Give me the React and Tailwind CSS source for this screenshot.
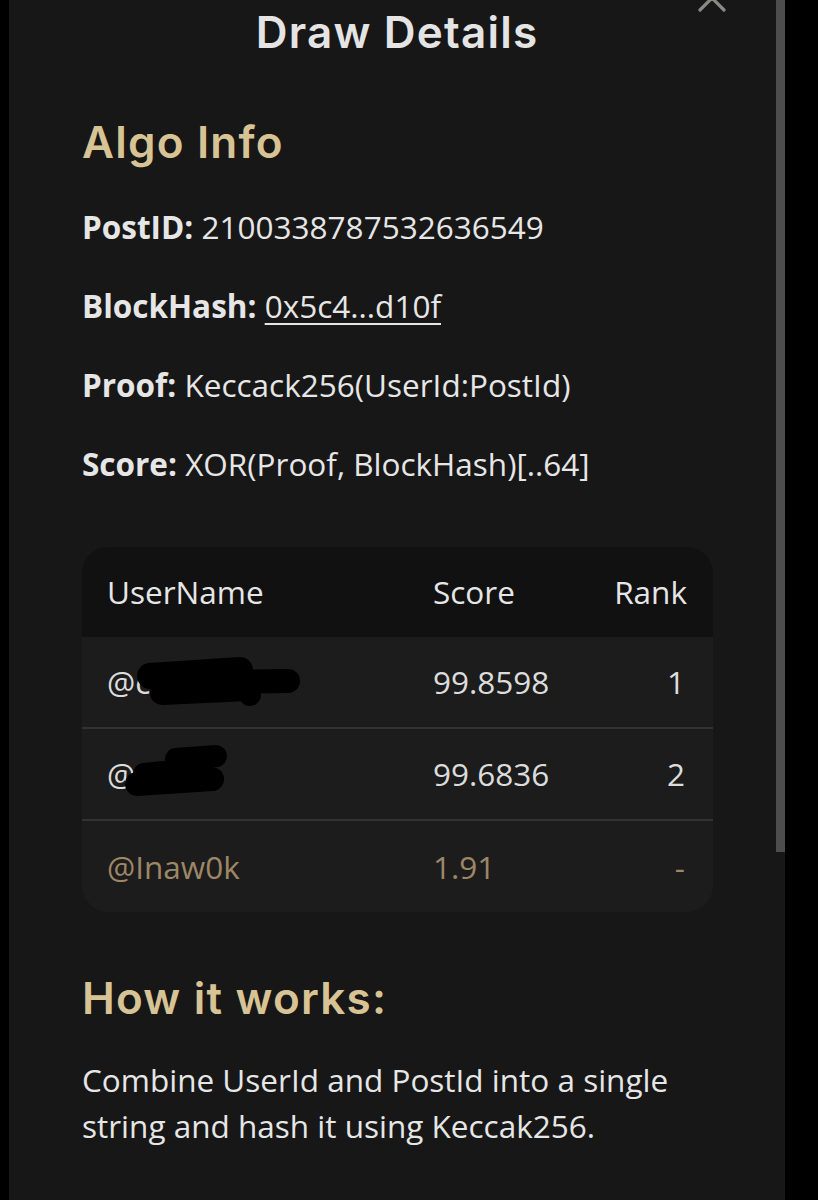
import React from "react";

const body = { fontFamily: '"Open Sans", "Noto Sans", sans-serif' };
const head = { fontFamily: 'Inter, "Open Sans", sans-serif' };

function Scribble1() {
  return (
    <svg className="absolute left-0 top-0" width="320" height="92" viewBox="0 0 320 92">
      <g stroke="#000" strokeLinecap="round" fill="none">
        <path d="M68 39 L158 33" strokeWidth="26" />
        <path d="M80 56 L166 52" strokeWidth="24" />
        <path d="M150 45 L206 44" strokeWidth="24" />
      </g>
      <circle cx="168" cy="58" r="11" fill="#000" />
    </svg>
  );
}

function Scribble2() {
  return (
    <svg className="absolute left-0 top-0" width="320" height="92" viewBox="0 0 320 92">
      <g stroke="#000" strokeLinecap="round" fill="none">
        <path d="M94 30 L134 27" strokeWidth="22" />
        <path d="M55 55 L130 50" strokeWidth="24" />
        <path d="M62 45 L92 42" strokeWidth="22" />
      </g>
    </svg>
  );
}

export default function App() {
  return (
    <div className="w-[818px] h-[1200px] bg-black flex overflow-hidden" style={body}>
      <div className="ml-[9px] w-[767px] h-full bg-[#171717] relative">
        <svg className="absolute left-[689px] top-[-16px]" width="28" height="28" viewBox="0 0 28 28">
          <path d="M2 2 L26 26 M26 2 L2 26" stroke="#8a8a82" strokeWidth="3.2" strokeLinecap="round" />
        </svg>

        <div className="pl-[9px] pt-[7px] text-center">
          <h1 className="text-[44px] leading-[50px] font-semibold text-[#e4e4e4] tracking-[1.2px]" style={head}>
            Draw Details
          </h1>
        </div>

        <div className="pl-[73px] pr-[40px]">
          <h2 className="mt-[60px] text-[44px] leading-[50px] font-semibold text-[#d8c395] tracking-[1.2px]" style={head}>
            Algo Info
          </h2>

          <div className="mt-[39px] flex flex-col gap-[38px] text-[31.5px] leading-[41px] text-[#e6e6e6]">
            <p><span className="font-bold">PostID:</span> 2100338787532636549</p>
            <p>
              <span className="font-bold">BlockHash:</span>{" "}
              <span className="underline decoration-2 underline-offset-[5px]">0x5c4...d10f</span>
            </p>
            <p><span className="font-bold">Proof:</span> Keccack256(UserId:PostId)</p>
            <p><span className="font-bold">Score:</span> XOR(Proof, BlockHash)[..64]</p>
          </div>

          <div className="mt-[63px] w-[631px] rounded-[26px] overflow-hidden bg-[#1c1c1c] text-[31.5px]">
            <div className="h-[90px] bg-[#111111] grid grid-cols-[326px_1fr_auto] items-center pl-[25px] pr-[26px] text-[#e6e6e6]">
              <span>UserName</span>
              <span>Score</span>
              <span className="text-right">Rank</span>
            </div>
            <div className="relative h-[92px] grid grid-cols-[326px_1fr_auto] items-center pl-[25px] pr-[28px] text-[#dcdcdc] border-b-2 border-[#323232]">
              <span>@c</span>
              <span>99.8598</span>
              <span className="text-right">1</span>
              <Scribble1 />
            </div>
            <div className="relative h-[92px] grid grid-cols-[326px_1fr_auto] items-center pl-[25px] pr-[28px] text-[#dcdcdc] border-b-2 border-[#323232]">
              <span>@v</span>
              <span>99.6836</span>
              <span className="text-right">2</span>
              <Scribble2 />
            </div>
            <div className="h-[91px] grid grid-cols-[326px_1fr_auto] items-center pl-[25px] pr-[28px] text-[#9d8766]">
              <span>@Inaw0k</span>
              <span>1.91</span>
              <span className="text-right">-</span>
            </div>
          </div>

          <h2 className="mt-[61px] text-[44px] leading-[50px] font-semibold text-[#d8c395] tracking-[1.2px]" style={head}>
            How it works:
          </h2>
          <p className="mt-[34px] text-[31.5px] leading-[46px] text-[#e6e6e6] w-[640px]">
            Combine UserId and PostId into a single string and hash it using Keccak256.
          </p>
        </div>
      </div>
      <div className="w-[9px] h-full flex flex-col">
        <div className="h-[852px] bg-[#4d4d4d]"></div>
        <div className="flex-1 bg-[#171717]"></div>
      </div>
      <div className="flex-1 bg-black"></div>
    </div>
  );
}
